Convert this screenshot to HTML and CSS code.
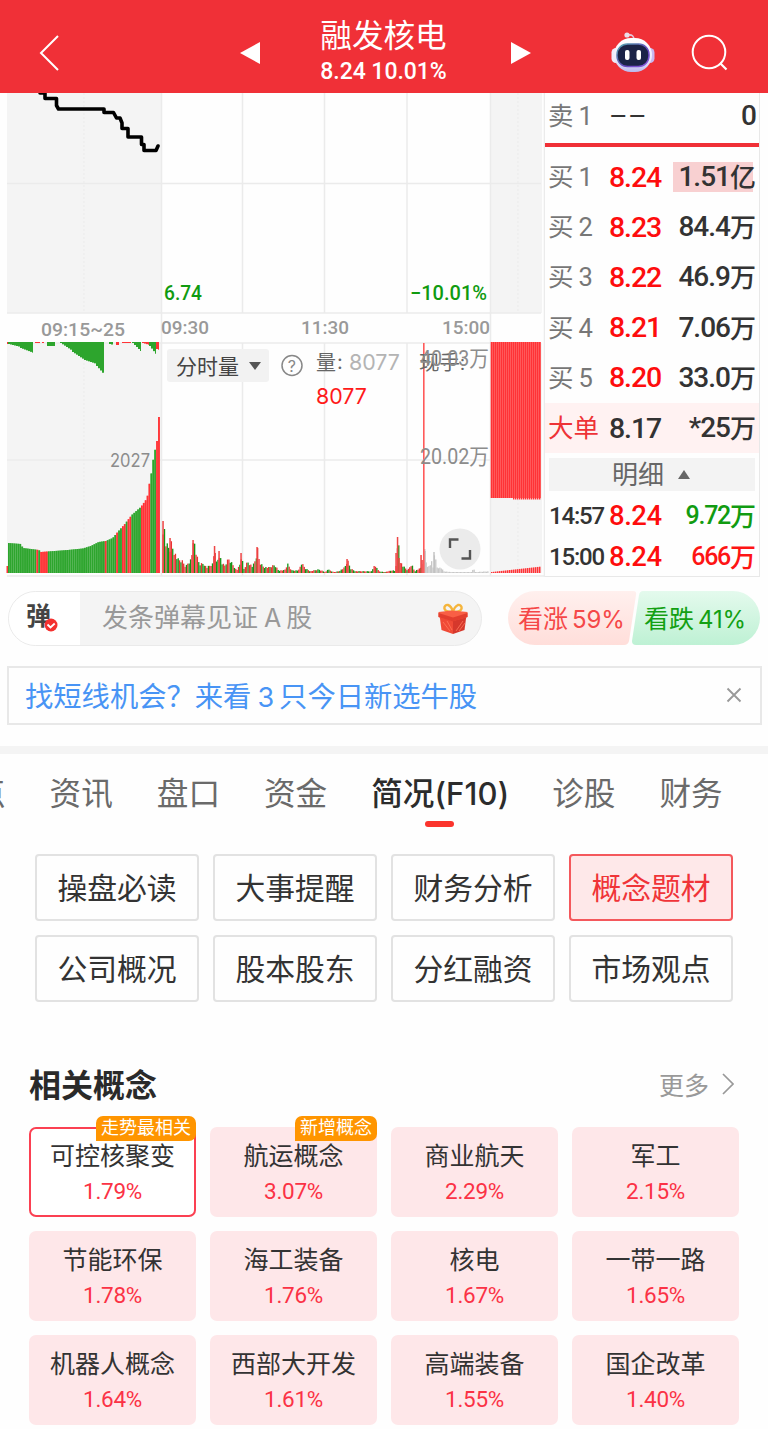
FILE: index.html
```html
<!DOCTYPE html>
<html lang="zh-CN">
<head>
<meta charset="utf-8">
<title>融发核电</title>
<link rel="stylesheet" href="styles.css">
</head>
<body>
<header class="topbar">
  <svg class="back" width="22" height="38" viewBox="0 0 22 38"><path d="M20 2 3 19 20 36" fill="none" stroke="#fff" stroke-width="2"/></svg>
  <div class="stock">
    <svg width="20" height="24" viewBox="0 0 20 24"><path d="M0 12 20 1v22z" fill="#fff"/></svg>
    <div class="stock-text"><h1>融发核电</h1><p>8.24 10.01%</p></div>
    <svg width="20" height="24" viewBox="0 0 20 24"><path d="M20 12 0 1v22z" fill="#fff"/></svg>
  </div>
  <div class="tools">
    <svg width="44" height="42" viewBox="0 0 44 42">
      <defs>
        <linearGradient id="shell" x1="0" y1="0" x2="0" y2="1"><stop offset="0" stop-color="#fff"/><stop offset=".65" stop-color="#ece9fb"/><stop offset="1" stop-color="#b9b8ee"/></linearGradient>
        <linearGradient id="rim" x1="0" y1="0" x2="1" y2="1"><stop offset="0" stop-color="#54a9ad"/><stop offset=".6" stop-color="#6547bd"/><stop offset="1" stop-color="#8c5ae0"/></linearGradient>
      </defs>
      <path d="M17 3q6-1 6 5" fill="none" stroke="#e4c7da" stroke-width="1.6"/><circle cx="16" cy="3" r="2.600" fill="#eadde9"/>
      <rect x=".5" y="16" width="9" height="15" rx="4.5" fill="#f0ebfa"/><rect x="34.500" y="16" width="9" height="15" rx="4.500" fill="#c9b8f0"/>
      <rect x="3" y="6" width="38" height="34" rx="17" fill="url(#shell)"/>
      <rect x="6" y="12" width="32" height="22.500" rx="10.500" fill="#1b2347" stroke="url(#rim)" stroke-width="1.500"/>
      <rect x="14" y="18" width="4.500" height="10" rx="2" fill="#fff"/><rect x="25.500" y="18" width="4.500" height="10" rx="2" fill="#fff"/>
    </svg>
    <svg width="38" height="38" viewBox="0 0 38 38"><circle cx="18" cy="18" r="16.300" fill="none" stroke="#fff" stroke-width="2"/><path d="m29 29 6.500 6.500" stroke="#fff" stroke-width="2.200"/></svg>
  </div>
</header>

<section class="market">
  <svg class="chart" width="545" height="484" viewBox="0 93 545 484">
    <g fill="#f4f4f4"><path d="M7 93h154v220H7zM490 93h52v220h-52zM7 343h154v230H7zM490 343h52v230h-52z"/></g>
    <path class="grid" d="M7 183.500H541M7 313H541M7 343H541M7 460H541M7 576H545M161.500 93V576M242.500 93V313M324.500 93V313M407 93V313M490.500 93V576M242.500 343V576M324.500 343V576M407 343V576M544.500 93V577"/>
    <path class="grid dots" d="M84 93V313M84 343V573M518 93V313M518 343V573"/>
    <path d="M40 93h5v5.500h11.500v7l2 3.500H104v3.500h9.500l3 5.500h3.500l2 5v5.500h6V137h13.500v7.500h2.500v6h12l2-4.500" fill="none" stroke="#000" stroke-width="3.600" stroke-linejoin="round" stroke-linecap="round"/>
    <g id="bars"></g>
    <rect x="423" y="343" width="1.600" height="230" fill="#ff5a5a"/>
    <g class="din green"><text x="164" y="300" textLength="38" lengthAdjust="spacingAndGlyphs">6.74</text><text x="410" y="300" textLength="77" lengthAdjust="spacingAndGlyphs">−10.01%</text></g>
    <g class="axis"><text x="41" y="336" textLength="84" lengthAdjust="spacingAndGlyphs">09:15~25</text><text x="161" y="334" textLength="48" lengthAdjust="spacingAndGlyphs">09:30</text><text x="301" y="334" textLength="48" lengthAdjust="spacingAndGlyphs">11:30</text><text x="442" y="334" textLength="48" lengthAdjust="spacingAndGlyphs">15:00</text></g>
    <text class="round" x="110" y="466.500" font-size="18" fill="#8c8c8c" textLength="40" lengthAdjust="spacingAndGlyphs">2027</text>
    <rect x="167" y="349" width="102" height="33" rx="3" fill="#f2f2f2"/>
    <text x="176" y="373.500" font-size="21" fill="#444" textLength="63">分时量</text>
    <path d="M249 362h12l-6 8z" fill="#555"/>
    <circle cx="292" cy="365.500" r="10" fill="none" stroke="#888" stroke-width="1.500"/><text class="round" x="287.700" y="371.500" font-size="16" fill="#888">?</text>
    <text x="316" y="370" font-size="20" fill="#666">量</text><text class="round" x="337" y="369" font-size="20" fill="#666">:</text>
    <text class="round" x="349" y="370" font-size="21" fill="#b4b4b4" textLength="51" lengthAdjust="spacingAndGlyphs">8077</text>
    <text class="round" x="316" y="403.500" font-size="21" fill="#ff1a1a" textLength="51" lengthAdjust="spacingAndGlyphs">8077</text>
    <text x="419" y="370" font-size="20.500" fill="#666">现手:</text>
    <g class="scale"><text x="420" y="366" textLength="69" lengthAdjust="spacingAndGlyphs">40.03万</text><text x="420" y="464" textLength="69" lengthAdjust="spacingAndGlyphs">20.02万</text></g>
    <circle cx="460" cy="549" r="20.500" fill="#ebebeb"/><path d="M450 548v-8.500h8.500M470 550v8.500h-8.500" fill="none" stroke="#555" stroke-width="2.400"/>
  </svg>
  <div class="book">
    <div class="row ask"><span class="side">卖<i>1</i></span><b class="plain dash">––</b><em>0</em></div>
    <div class="row"><span class="side">买<i>1</i></span><b>8.24</b><em class="hot">1.51<u>亿</u></em></div>
    <div class="row"><span class="side">买<i>2</i></span><b>8.23</b><em>84.4<u>万</u></em></div>
    <div class="row"><span class="side">买<i>3</i></span><b>8.22</b><em>46.9<u>万</u></em></div>
    <div class="row"><span class="side">买<i>4</i></span><b>8.21</b><em>7.06<u>万</u></em></div>
    <div class="row"><span class="side">买<i>5</i></span><b>8.20</b><em>33.0<u>万</u></em></div>
    <div class="row big"><span class="side">大单</span><b class="plain">8.17</b><em>*25<u>万</u></em></div>
    <div class="detail">明细<svg width="12" height="9" viewBox="0 0 12 9"><path d="M6 0l6 9H0z" fill="#666"/></svg></div>
    <div class="row tick"><span class="time">14:57</span><b>8.24</b><em class="down">9.72<u>万</u></em></div>
    <div class="row tick"><span class="time">15:00</span><b>8.24</b><em class="up">666<u>万</u></em></div>
  </div>
</section>

<section class="social">
  <div class="comment">
    <div class="toggle"><strong>弹</strong><svg class="check" width="14" height="14" viewBox="0 0 14 14"><circle cx="7" cy="7" r="6.500" fill="#f4312f"/><path d="m3.500 6.500 3 3 4.200-4" fill="none" stroke="#fff" stroke-width="1.800"/></svg></div>
    <span class="hint">发条弹幕见证<i>A</i>股</span>
    <svg width="30" height="32" viewBox="0 0 30 32">
      <path d="M14 9C3 9 6 1 10 2c3 1 4 3 5 7 1-4 3-6 5-7 4-1 7 7-4 7z" fill="none" stroke="#f5b53c" stroke-width="2.400"/>
      <path d="M1.500 12 15 17v14L3.500 27z" fill="#f04a36"/><path d="M15 17l13.500-5-2 15L15 31z" fill="#d6382c"/><path d="M.5 9 14 7.500 29.500 9v5L15 18 .5 14z" fill="#f95f45"/><path d="M.5 10 15 14.500 29.500 10v4L15 18.500.5 14z" fill="#e23e2e"/><path d="M5 19l7 9M9 18l5 9M25 18l-7 10M27 20l-6 8" stroke="#ff785c" stroke-width=".8"/>
    </svg>
  </div>
  <div class="votes">
    <svg class="vote-bg" width="252" height="54" viewBox="0 0 252 54">
      <defs><linearGradient id="r" x1="0" y1="0" x2="0" y2="1"><stop stop-color="#fff0ee"/><stop offset="1" stop-color="#ffdeda"/></linearGradient><linearGradient id="g" x1="0" y1="0" x2="0" y2="1"><stop stop-color="#e4faed"/><stop offset="1" stop-color="#bef1d4"/></linearGradient></defs>
      <path d="M27 0H125q4 0 3 4L121 50q-1 4-5 4H27A27 27 0 0 1 27 0z" fill="url(#r)"/><path d="M135 0H225a27 27 0 0 1 0 54H128q-4 0-4-4L131 4q1-4 4-4z" fill="url(#g)"/>
    </svg>
    <span class="bull">看涨<i>59%</i></span><span class="bear">看跌<i>41%</i></span>
  </div>
</section>

<aside class="promo"><span>找短线机会？来看<i>3</i>只今日新选牛股</span><svg width="16" height="16" viewBox="0 0 16 16"><path d="m1.500 1.500 13 13m0-13-13 13" stroke="#999" stroke-width="1.900"/></svg></aside>

<nav class="tabs"><a class="cut">点</a><a>资讯</a><a>盘口</a><a>资金</a><a class="on">简况<i>(F10)</i></a><a>诊股</a><a>财务</a></nav>

<div class="menu"><a>操盘必读</a><a>大事提醒</a><a>财务分析</a><a class="on">概念题材</a><a>公司概况</a><a>股本股东</a><a>分红融资</a><a>市场观点</a></div>

<section class="concepts">
  <div class="head"><h2>相关概念</h2><span>更多<svg width="12" height="22" viewBox="0 0 12 22"><path d="m1 1 10 10L1 21" fill="none" stroke="#999" stroke-width="1.700"/></svg></span></div>
  <div class="tiles">
    <div class="tile on"><small>走势最相关</small><span>可控核聚变</span><b>1.79%</b></div>
    <div class="tile"><small>新增概念</small><span>航运概念</span><b>3.07%</b></div>
    <div class="tile"><span>商业航天</span><b>2.29%</b></div>
    <div class="tile"><span>军工</span><b>2.15%</b></div>
    <div class="tile"><span>节能环保</span><b>1.78%</b></div>
    <div class="tile"><span>海工装备</span><b>1.76%</b></div>
    <div class="tile"><span>核电</span><b>1.67%</b></div>
    <div class="tile"><span>一带一路</span><b>1.65%</b></div>
    <div class="tile"><span>机器人概念</span><b>1.64%</b></div>
    <div class="tile"><span>西部大开发</span><b>1.61%</b></div>
    <div class="tile"><span>高端装备</span><b>1.55%</b></div>
    <div class="tile"><span>国企改革</span><b>1.40%</b></div>
  </div>
</section>
<script src="chart.js"></script>
</body>
</html>
```
FILE: styles.css
```css
* { box-sizing: border-box; margin: 0; padding: 0; }
i, em, u { font-style: normal; text-decoration: none; }
body { width: 768px; height: 1429px; overflow: hidden; background: #fefefe; color: #333; font-family: Roboto, "Noto Sans CJK SC", sans-serif; }
svg { display: block; flex: none; }

.topbar { height: 93px; background: #f03037; color: #fff; display: grid; grid-template-columns: 240px 291px 1fr; align-items: center; padding-top: 13px; }
.back { margin-left: 38px; }
.stock { display: flex; align-items: center; justify-content: space-between; }
.stock-text { text-align: center; margin: -9px 4px 0 0; }
.stock h1 { font: 400 31.600px/44px "Noto Sans CJK SC", sans-serif; }
.stock p { font-size: 23px; font-weight: 500; line-height: 30px; letter-spacing: -.05px; padding-top: 2px; }
.tools { display: flex; align-items: center; gap: 36px; padding-left: 80px; }

.market { display: flex; height: 484px; }
.chart text { font-family: Roboto, "Noto Sans CJK SC", sans-serif; }
.chart .round { font-family: Inter, sans-serif; }
.grid { fill: none; stroke: #ebebeb; stroke-width: 1.500; }
.dots { stroke-width: 1; stroke-dasharray: 2 2; }
.din text { font-size: 20px; font-weight: 500; }
.green { fill: #109b10; }
.axis text { font-size: 19px; font-weight: 500; fill: #999; }
.scale text { font-size: 22px; fill: #8c8c8c; }

.book { width: 215px; border-right: 1px solid #e8e8e8; border-bottom: 1px solid #e8e8e8; }
.row { height: 50.200px; display: grid; grid-template-columns: 64px 60px 1fr; align-items: center; padding: 0 3px 0 0; }
.row.ask { height: 54px; border-bottom: 4px solid #f03037; padding-bottom: 4px; margin-bottom: 5px; }
.side { display: flex; gap: 5px; padding-left: 3px; font-size: 25.500px; line-height: 36px; color: #777; }
.row b { font-size: 28.500px; font-weight: 500; letter-spacing: -1.100px; color: #fe0d0d; }
.row b.plain { color: #333; font-weight: 500; }
.row b.dash { letter-spacing: .300px; font-weight: 400; }
.row em { font-size: 28px; font-weight: 500; letter-spacing: -1px; display: flex; justify-content: flex-end; align-items: center; color: #333; line-height: 30px; }
.row u { font: 500 26px/30px "Noto Sans CJK SC", sans-serif; letter-spacing: 0; margin-top: -2px; }
.row .hot { background: linear-gradient(90deg, transparent 4px, #f8d0d1 4px, #f8d0d1 calc(100% - 3px), transparent 0); }
.row.big { background: #fff2f2; }
.row.big .side { color: #ee3337; }
.detail { height: 33px; margin: 5px 4px 4px; background: #f3f3f3; display: flex; justify-content: center; align-items: center; gap: 14px; padding-right: 2px; font-size: 26px; line-height: 30px; color: #666; }
.row.tick { height: 41px; }
.time { font-size: 24px; font-weight: 500; letter-spacing: -1.200px; padding-left: 4px; }
.tick em { font-size: 25px; letter-spacing: -1.300px; }
.tick b { font-size: 27.500px; letter-spacing: -.500px; }
.row .down { color: #119b11; }
.row .up { color: #fe1414; }

.social { display: flex; justify-content: space-between; padding: 14px 8px 0; }
.comment { width: 474px; height: 55px; border: 1.500px solid #eaeaea; border-radius: 28px; overflow: hidden; background: #f4f4f4; display: flex; align-items: center; padding-right: 13px; }
.toggle { position: relative; width: 71px; height: 100%; background: #fff; padding: 6px 0 0 17px; }
.toggle strong { display: block; font-size: 25px; line-height: 38px; color: #444; }
.check { position: absolute; left: 35px; top: 26px; }
.hint { flex: 1; padding-left: 22px; font-size: 26px; line-height: 36px; margin-top: -2px; color: #999; }
.hint i { margin: 0 5px 0 6px; font-size: 25px; font-family: Inter, sans-serif; }
.votes { position: relative; width: 252px; height: 54px; display: grid; grid-template-columns: 126px 126px; align-items: center; font-size: 25px; white-space: nowrap; }
.vote-bg { position: absolute; inset: 0; }
.votes span { position: relative; padding-left: 10px; margin-top: -2px; }
.votes i { font: 400 24px Inter, sans-serif; letter-spacing: -.100px; margin-left: 4px; }
.bull { color: #f54848; }
.bear { color: #13a013; }

.promo { margin: 20px 6px 0 7px; height: 59px; border: 2px solid #e8e8e8; display: flex; align-items: center; justify-content: space-between; padding: 0 18px 2px 16px; font-size: 28.300px; color: #4894f5; }
.promo i { font-family: Inter, sans-serif; font-size: 27px; margin: 0 5px 0 6px; }

.tabs { margin-top: 21px; border-top: 8px solid #f4f4f4; height: 88px; display: flex; gap: 44px; line-height: 81px; font-size: 31.600px; color: #6a6a6a; white-space: nowrap; }
.tabs .cut { margin-left: -26px; }
.tabs .on { position: relative; width: 137px; color: #2c2c2c; font-weight: 500; }
.tabs i { font: 500 31px Inter, sans-serif; letter-spacing: .200px; }
.tabs .on::after { content: ""; position: absolute; left: 54px; top: 67px; width: 29px; height: 6px; border-radius: 3px; background: #fb342d; }

.menu { display: grid; grid-template-columns: repeat(4, 164px); gap: 14px; grid-template-rows: 67px 67px; padding: 20px 35px 0; }
.menu a { border: 2px solid #e2e2e2; border-radius: 4px; font-size: 29.800px; line-height: 65px; text-align: center; }
.menu a.on { border-color: #f4585c; background: #fee8e9; color: #f03438; }

.concepts { padding: 59px 29px 0; }
.head { display: flex; justify-content: space-between; align-items: center; height: 46px; padding-right: 5px; }
.head h2 { font: 700 32px/46px "Noto Sans CJK SC", sans-serif; color: #2a2a2a; margin-top: -2px; }
.head span { display: flex; align-items: center; gap: 13px; font-size: 25px; color: #999; }
.tiles { display: grid; grid-template-columns: repeat(4, 167px); grid-auto-rows: 90px; gap: 14px; margin-top: 20px; }
.tile { position: relative; display: flex; flex-direction: column; align-items: center; border-radius: 7px; background: #fee7e9; padding-top: 12px; }
.tile.on { background: #fff; box-shadow: inset 0 0 0 2px #fb4052; }
.tile span { font-size: 25px; line-height: 35px; }
.tile b { font-size: 22.500px; line-height: 35px; letter-spacing: -.300px; font-weight: 400; color: #fb3245; }
.tile small { position: absolute; right: 0; top: -11px; height: 25px; padding: 0 5px; border-radius: 7px 7px 7px 0; background: #ff9500; color: #fff; font-size: 18px; line-height: 24px; }
```
FILE: chart.js
```javascript
const host = document.getElementById('bars');
const RED = '#ff3336', GREEN = '#2da52d';
function bar(x, y, w, h, fill) {
  const r = document.createElementNS('http://www.w3.org/2000/svg', 'rect');
  for (const [k, v] of Object.entries({ x, y, width: w, height: h, fill })) r.setAttribute(k, v);
  host.appendChild(r);
}
function interp(pts, x) {
  for (let i = 1; i < pts.length; i++) {
    if (x <= pts[i][0]) {
      const [a, b] = [pts[i - 1], pts[i]];
      return a[1] + (b[1] - a[1]) * (x - a[0]) / (b[0] - a[0]);
    }
  }
  return pts[pts.length - 1][1];
}

// Opening auction: unmatched volume hangs from the top
[[7, 10, 2, 2, RED], [8, 20, 2, 5, GREEN], [20, 33, 6, 11, GREEN], [35, 40, 1, 1, RED], [42, 44, 1, 1, RED],
 [47, 55, 4, 4, GREEN], [60, 72, 1, 9, GREEN], [72, 84, 10, 18, GREEN], [84, 96, 18, 22, GREEN], [96, 104, 24, 33, GREEN],
 [109, 113, 2, 3, GREEN], [116, 119, 3, 3, RED], [122, 131, 1, 1, RED], [132, 141, 1, 10, GREEN], [142, 149, 1, 3, RED],
 [149, 156, 4, 13, GREEN], [156, 159, 7, 8, RED]].forEach(([a, b, h1, h2, c]) => {
  bar(a, 342, b - a, Math.min(h1, h2), c);
  for (let x = a; x < b; x += 2) bar(x, 342, Math.min(2, b - x), h1 + (h2 - h1) * (x - a) / (b - a), c);
});
// Opening auction: matched volume
const open = [[7, 543], [20, 544], [22, 548], [38, 550], [40, 552], [54, 551], [67, 550], [82, 548.500], [90, 546], [98, 542], [105, 541], [112, 538], [116, 533], [124, 524], [131, 515], [140, 507], [145, 500], [147, 495], [149, 481], [151, 471], [153, 455], [155, 447], [156, 447], [157, 417], [160, 417]];
const redRanges = [[35, 37], [39, 46], [104, 106], [115, 117], [122, 124], [127, 131], [141, 149], [156.200, 160]];
bar(6.500, 566, 1.500, 7, RED);
for (let x = 8; x < 158.500; x += 1.900) {
  const y = interp(open, x), red = redRanges.some(([a, b]) => x >= a && x <= b);
  bar(x, y, 1.900, 573 - y, red ? '#ff6265' : '#63bb63');
  bar(x, y, 1.600, 573 - y, red ? RED : GREEN);
}
// Continuous session, minute by minute
const day = [[162, 548], [163, 521], [164, 524], [166, 548], [167, 539], [169, 549], [170, 537], [173, 547], [177, 558], [182, 560], [185, 566], [187, 562], [190, 558], [193, 541], [194, 540], [196, 554], [199, 563], [203, 562], [206, 567], [212, 563], [214, 547], [215, 546], [216, 562], [219, 551], [221, 562], [224, 565], [228, 557], [232, 563], [236, 570], [239, 565], [241, 553], [243, 569], [247, 560], [252, 566], [255, 558], [257, 547], [259, 561], [263, 566], [268, 567], [274, 564], [278, 570], [284, 570], [287, 563], [291, 570], [298, 570], [301, 562], [305, 568], [310, 571], [318, 569], [325, 572], [327, 569], [333, 572], [338, 571], [344, 567], [347, 559], [350, 568], [355, 571], [362, 571], [371, 571], [373, 566], [376, 566], [378, 571], [384, 572], [392, 570], [395, 571], [396, 553], [398, 537], [399, 558], [402, 565], [407, 570], [411, 563], [414, 571], [417, 569], [420, 568], [421, 554], [423, 565], [424, 543], [425, 556], [427, 567], [431, 560], [433, 569], [434, 551], [437, 569], [440, 566], [443, 571], [450, 572], [471, 572], [473, 568], [475, 572], [490, 571]];
let n = 0;
for (let x = 162.500; x < 488; x += 1.370, n++) {
  const base = interp(day, x), jitter = ((n * 37) % 11) / 11;
  const y = Math.min(572, base + (573 - base) * jitter * .3);
  const up = (n * 7 + Math.floor(n / 5) * 3) % 11 < 6;
  bar(x, y, 1.300, 573 - y, x > 424 ? '#c7c7c7' : up ? '#e93232' : '#159315');
}
// Single-minute surges
[[163, 521], [170, 538], [193, 540], [214.500, 546], [219, 551], [241, 553], [257, 547], [347, 559], [396, 553], [397.500, 537], [399, 558], [421, 555]].forEach(([x, y]) => bar(x - .7, y, 1.500, 573 - y, '#ee4545'));
[[425, 551], [434, 552]].forEach(([x, y]) => bar(x - .7, y, 1.400, 573 - y, '#c0c0c0'));
// Closing auction
bar(490.500, 342, 50.500, 156, '#ff7474');
for (let x = 491; x < 541; x += 2) {
  bar(x, 342, 1.400, x < 512 ? 156 : 157.500, RED);
  const h = 1 + (x - 491) / 50 * 5.500;
  bar(x, 573 - h, 1.500, h, RED);
}
```
